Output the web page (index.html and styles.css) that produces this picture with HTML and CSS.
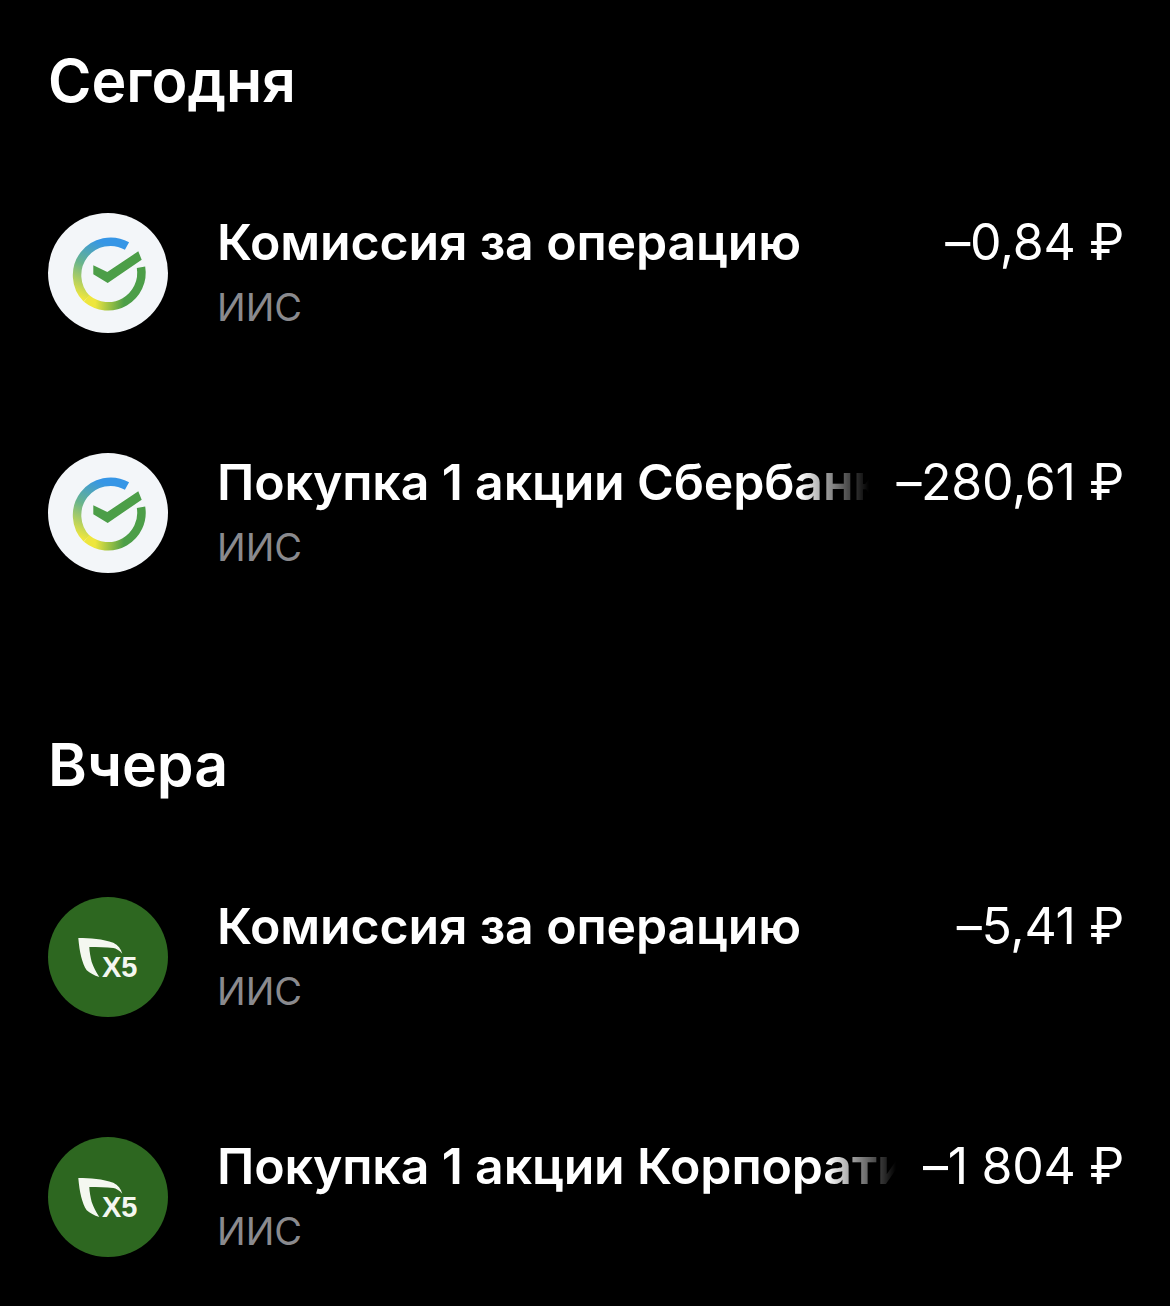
FILE: index.html
```html
<!DOCTYPE html>
<html lang="ru">
<head>
    <meta charset="UTF-8">
    <title>Операции</title>
    <link rel="stylesheet" href="styles.css">
</head>
<body>
    <svg class="defs" width="0" height="0">
        <defs>
            <linearGradient id="ringLeft" gradientUnits="userSpaceOnUse" x1="70" y1="25" x2="40" y2="88">
                <stop offset="0.15" stop-color="#3696e6"/>
                <stop offset="0.55" stop-color="#68b48c"/>
                <stop offset="1" stop-color="#eee63e"/>
            </linearGradient>
            <linearGradient id="ringRight" gradientUnits="userSpaceOnUse" x1="40" y1="88" x2="76" y2="90">
                <stop offset="0.2" stop-color="#eee63e"/>
                <stop offset="1" stop-color="#4c9e48"/>
            </linearGradient>
            <g id="sberLogo">
                <path d="M79 33 A33.5 33.5 0 0 0 38.6 85.6" fill="none" stroke="url(#ringLeft)" stroke-width="8.5"/>
                <path d="M38.6 85.6 A33.5 33.5 0 0 0 93 54.2" fill="none" stroke="url(#ringRight)" stroke-width="8.5"/>
                <path d="M45.3 52.3 L59.3 59 L90.3 38.3 L93.7 46.7 L59.7 70 L45.3 61.3 Z" fill="#4c9e48"/>
            </g>
            <g id="x5Logo">
                <path d="M30.3 41 C42 41 55 42 65.3 45.7 C70 48 73 52 74.3 56.7 C71 53 68 51.5 65.3 51 C58 50 50 50 41.3 50 C41.5 55 42.5 60 43.7 65 C45.5 70 48 75 51.3 80 C46 78.5 42 76 38.7 73.3 C34 66 31.5 55 30.3 41 Z" fill="#f4f7f0"/>
                <text x="54" y="80" class="x5-text">X5</text>
            </g>
        </defs>
    </svg>

    <section class="day">
        <h2 class="day-title">Сегодня</h2>
        <div class="row">
            <svg class="logo logo-sber" viewBox="0 0 120 120"><use href="#sberLogo"/></svg>
            <div class="info">
                <div class="info-top">
                    <div class="name">Комиссия за операцию</div>
                    <div class="amount">–0,84 ₽</div>
                </div>
                <div class="sub">ИИС</div>
            </div>
        </div>
        <div class="row">
            <svg class="logo logo-sber" viewBox="0 0 120 120"><use href="#sberLogo"/></svg>
            <div class="info">
                <div class="info-top">
                    <div class="name fade">Покупка 1 акции Сбербанка</div>
                    <div class="amount">–280,61 ₽</div>
                </div>
                <div class="sub">ИИС</div>
            </div>
        </div>
    </section>

    <section class="day">
        <h2 class="day-title">Вчера</h2>
        <div class="row">
            <svg class="logo logo-x5" viewBox="0 0 120 120"><use href="#x5Logo"/></svg>
            <div class="info">
                <div class="info-top">
                    <div class="name">Комиссия за операцию</div>
                    <div class="amount">–5,41 ₽</div>
                </div>
                <div class="sub">ИИС</div>
            </div>
        </div>
        <div class="row">
            <svg class="logo logo-x5" viewBox="0 0 120 120"><use href="#x5Logo"/></svg>
            <div class="info">
                <div class="info-top">
                    <div class="name fade">Покупка 1 акции Корпоративного</div>
                    <div class="amount">–1 804 ₽</div>
                </div>
                <div class="sub">ИИС</div>
            </div>
        </div>
    </section>
</body>
</html>
```

FILE: styles.css
```css
html, body {
    margin: 0;
    padding: 0;
}
body {
    background: #000;
    color: #fff;
    font-family: Inter, "Liberation Sans", sans-serif;
    height: 1306px;
    overflow: hidden;
    padding: 0 46px 0 48px;
    box-sizing: border-box;
}
.defs {
    position: absolute;
}
.day {
    padding-top: 46px;
    padding-bottom: 157px;
}
.day + .day {
    padding-top: 0;
    padding-bottom: 0;
}
.day-title {
    margin: 0 0 97px 0;
    font-size: 59px;
    line-height: 70px;
    font-weight: 600;
}
.row {
    display: flex;
    align-items: center;
    gap: 49px;
    height: 120px;
    margin-bottom: 120px;
}
.day .row:last-child {
    margin-bottom: 0;
}
.logo {
    width: 120px;
    height: 120px;
    border-radius: 50%;
    flex-shrink: 0;
}
.logo-sber {
    background: #f3f6f9;
}
.logo-x5 {
    background: #2d6720;
}
.x5-text {
    font-family: "Liberation Sans", sans-serif;
    font-size: 29px;
    font-weight: 700;
    fill: #f4f7f0;
}
.info {
    flex: 1;
    min-width: 0;
    padding-bottom: 2px;
}
.info-top {
    display: flex;
    gap: 27px;
    justify-content: space-between;
    font-size: 50px;
    line-height: 60px;
}
.name {
    flex: 1;
    min-width: 0;
    font-weight: 600;
    letter-spacing: -0.15px;
    white-space: nowrap;
    overflow: hidden;
}
.fade {
    -webkit-mask-image: linear-gradient(to left, transparent 0, #000 70px);
    mask-image: linear-gradient(to left, transparent 0, #000 70px);
}
.amount {
    flex-shrink: 0;
    font-weight: 400;
    letter-spacing: -0.3px;
    white-space: nowrap;
}
.sub {
    margin-top: 10px;
    font-size: 38px;
    line-height: 50px;
    color: #8a8a8e;
}
```
